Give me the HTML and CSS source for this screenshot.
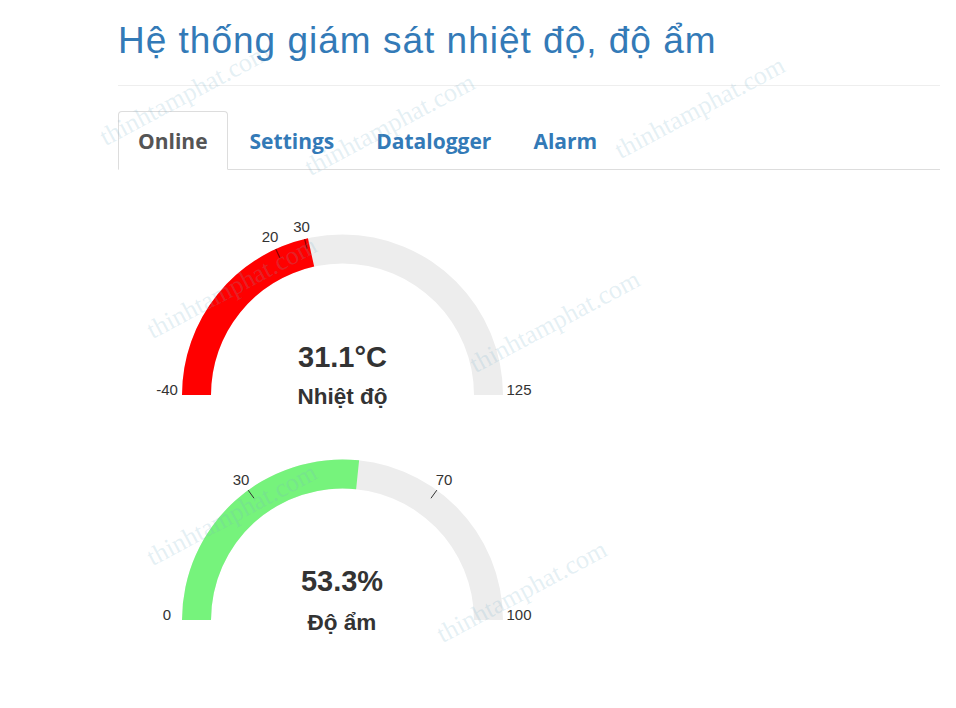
FILE: index.html
```html
<!DOCTYPE html>
<html lang="vi">
<head>
<meta charset="utf-8">
<title>Hệ thống giám sát nhiệt độ, độ ẩm</title>
<link rel="stylesheet" href="styles.css">
</head>
<body>
<div class="page">
  <header class="page-header">
    <h1 class="title">Hệ thống giám sát nhiệt độ, độ ẩm</h1>
  </header>
  <ul class="nav-tabs">
    <li class="tab active"><a href="#">Online</a></li>
    <li class="tab"><a href="#">Settings</a></li>
    <li class="tab"><a href="#">Datalogger</a></li>
    <li class="tab"><a href="#">Alarm</a></li>
  </ul>
  <section class="gauges">
    <svg class="gauge" width="420" height="220" viewBox="0 0 420 220">
      <path class="g-bg" d="M52,195 A160.5 160.5 0 0 1 373,195 L344,195 A131.5 131.5 0 0 0 81,195 Z"/>
      <path class="g-red" d="M52,195 A160.5 160.5 0 0 1 177.93,38.27 L184.17,66.59 A131.5 131.5 0 0 0 81,195 Z"/>
      <line class="g-tick-on" x1="145.81" y1="49" x2="149.97" y2="58.1"/>
      <line class="g-tick-on" x1="174.65" y1="39.02" x2="177.01" y2="48.74"/>
      <text class="g-lbl" x="140" y="42">20</text>
      <text class="g-lbl" x="171.5" y="32">30</text>
      <text class="g-lbl" x="37" y="195">-40</text>
      <text class="g-lbl" x="389" y="195">125</text>
      <text class="g-value" x="212.5" y="166.5">31.1°C</text>
      <text class="g-name" x="212.5" y="204">Nhiệt độ</text>
    </svg>
    <svg class="gauge" width="420" height="220" viewBox="0 0 420 220">
      <path class="g-bg" d="M52,195 A160.5 160.5 0 0 1 373,195 L344,195 A131.5 131.5 0 0 0 81,195 Z"/>
      <path class="g-green" d="M52,195 A160.5 160.5 0 0 1 229.11,35.37 L226.11,64.21 A131.5 131.5 0 0 0 81,195 Z"/>
      <line class="g-tick" x1="118.16" y1="65.16" x2="124.04" y2="73.25"/>
      <line class="g-tick" x1="306.84" y1="65.16" x2="300.96" y2="73.25"/>
      <text class="g-lbl" x="111" y="60">30</text>
      <text class="g-lbl" x="314" y="60">70</text>
      <text class="g-lbl" x="37" y="195">0</text>
      <text class="g-lbl" x="389" y="195">100</text>
      <text class="g-value" x="212" y="165.5">53.3%</text>
      <text class="g-name" x="212" y="205">Độ ẩm</text>
    </svg>
  </section>
</div>
<div class="watermarks" aria-hidden="true">
  <span class="wm wm1">thinhtamphat.com</span>
  <span class="wm wm2">thinhtamphat.com</span>
  <span class="wm wm3">thinhtamphat.com</span>
  <span class="wm wm4">thinhtamphat.com</span>
  <span class="wm wm5">thinhtamphat.com</span>
  <span class="wm wm6">thinhtamphat.com</span>
  <span class="wm wm7">thinhtamphat.com</span>
</div>
</body>
</html>
```
FILE: styles.css
```css
html, body {
  margin: 0;
  padding: 0;
  background: #fff;
}
body {
  font-family: "Liberation Sans", Arial, sans-serif;
  color: #333;
  width: 956px;
  height: 708px;
  overflow: hidden;
  position: relative;
}
.page {
  margin-left: 118px;
  width: 822px;
}
.page-header {
  padding: 21px 0 24px;
  border-bottom: 1px solid #eee;
}
.title {
  margin: 0;
  font-family: "Liberation Sans", Arial, sans-serif;
  font-weight: 400;
  font-size: 37px;
  letter-spacing: 1px;
  line-height: 40px;
  color: #337ab7;
}
.nav-tabs {
  list-style: none;
  margin: 25px 0 0;
  padding: 0;
  display: flex;
  border-bottom: 1px solid #ddd;
}
.tab {
  margin-right: 2px;
  margin-bottom: -1px;
}
.tab a {
  display: block;
  padding: 2px 19px 0;
  line-height: 55px;
  border: 1px solid transparent;
  border-radius: 4px 4px 0 0;
  font-family: "Open Sans", "Noto Sans", sans-serif;
  font-weight: 700;
  font-size: 21px;
  color: #337ab7;
  text-decoration: none;
}
.tab.active a {
  color: #555;
  background: #fff;
  border-color: #ddd #ddd transparent;
}
.gauges {
  padding-top: 30px;
  padding-left: 12px;
  display: flex;
  flex-direction: column;
  gap: 5px;
}
.gauge {
  display: block;
}
.g-bg { fill: #ededed; }
.g-red { fill: #ff0000; }
.g-green { fill: #76f37c; }
.g-tick { stroke: #333; stroke-width: 1; }
.g-tick-on { stroke: #8a0000; stroke-width: 1.2; }
.g-lbl {
  font-family: "Liberation Sans", Arial, sans-serif;
  font-size: 15px;
  fill: #333;
  text-anchor: middle;
}
.g-value {
  font-family: "Liberation Sans", Arial, sans-serif;
  font-size: 29px;
  font-weight: 700;
  fill: #333;
  text-anchor: middle;
}
.g-name {
  font-family: "Liberation Sans", Arial, sans-serif;
  font-size: 22.5px;
  font-weight: 700;
  fill: #333;
  text-anchor: middle;
}
.watermarks {
  position: absolute;
  left: 0;
  top: 0;
  width: 956px;
  height: 708px;
  pointer-events: none;
}
.wm {
  position: absolute;
  width: 220px;
  margin-left: -110px;
  margin-top: -15px;
  text-align: center;
  font-family: "Liberation Serif", "Times New Roman", serif;
  font-size: 26px;
  line-height: 30px;
  color: rgba(120, 175, 200, 0.2);
  transform: rotate(-28deg);
  white-space: nowrap;
}
.wm1 { left: 185px; top: 95px; }
.wm2 { left: 390px; top: 125px; }
.wm3 { left: 700px; top: 108px; }
.wm4 { left: 232px; top: 288px; }
.wm5 { left: 555px; top: 322px; }
.wm6 { left: 232px; top: 515px; }
.wm7 { left: 522px; top: 592px; }
```
